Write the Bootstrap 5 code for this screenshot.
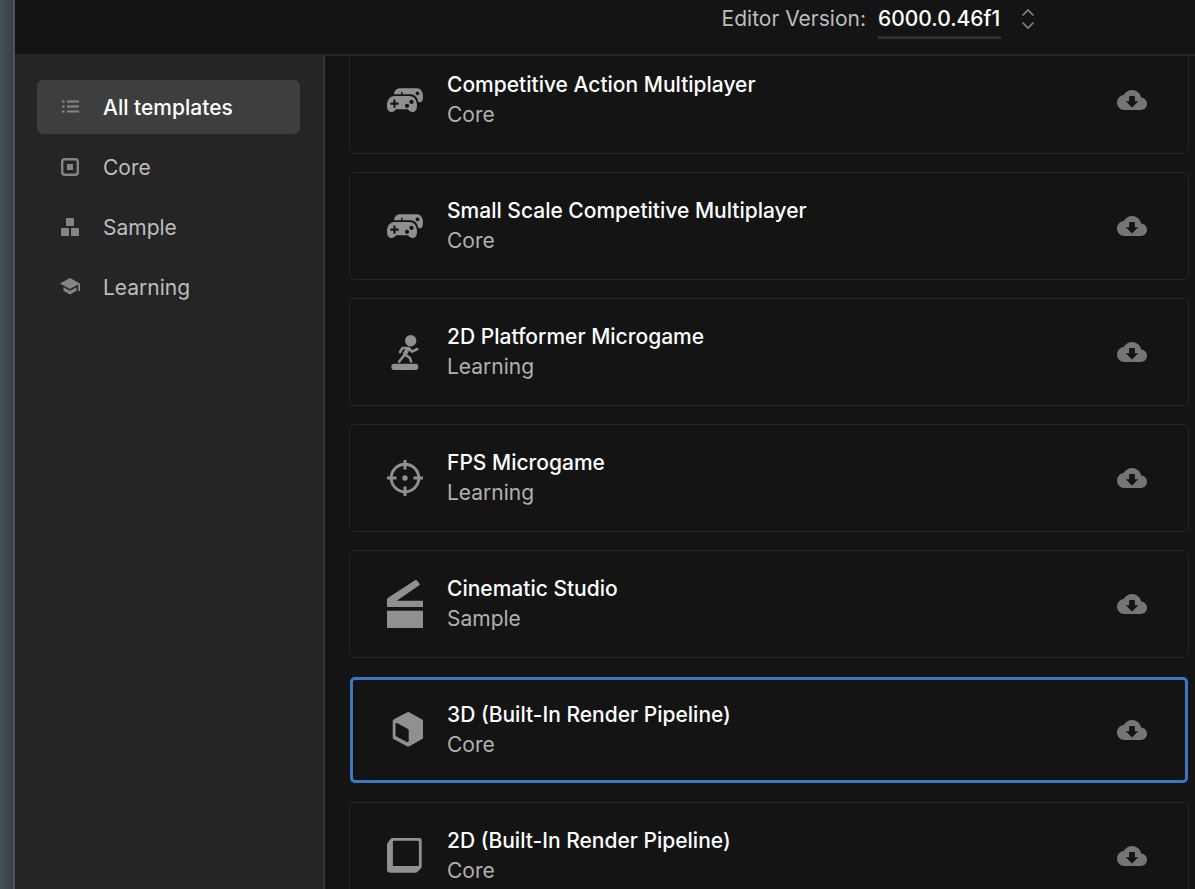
<!DOCTYPE html>
<html lang="en" data-bs-theme="dark">
<head>
<meta charset="utf-8">
<meta name="viewport" content="width=device-width, initial-scale=1">
<title>New project</title>
<link href="https://cdn.jsdelivr.net/npm/bootstrap@5.3.0/dist/css/bootstrap.min.css" rel="stylesheet">
<style>
  body { font-family: Inter, "Liberation Sans", sans-serif; font-size: 21px; line-height: 30px; color: #bdbdbd; background: #141414; }
  .desktop-edge { width: 15px; border-right: 2px solid #4e5557; background: linear-gradient(to right, #465158, #394145); }
  .topbar { height: 56px; border-bottom: 2px solid #282828; padding: 4px 160px 0 0; }
  .version-select { appearance: none; background: transparent; color: #fff; font-weight: 500; border: 0; border-bottom: 3px solid #303030; padding: 0 0 2px; margin-left: 12px; line-height: 30px; border-radius: 0; }
  .version-arrows { width: 14px; height: 22px; margin: 4px 0 0 20px; }
  .sidebar { width: 310px; background: #252525; border-right: 2px solid #363636; padding: 24px 23px 24px 22px; }
  .sidebar .nav { gap: 6px; }
  .sidebar .nav-link { display: flex; align-items: flex-end; gap: 18px; padding: 13px 18px 11px; color: #bdbdbd; border-radius: 6px; }
  .sidebar .nav-link.active { background: #3e3e3e; color: #fff; font-weight: 500; }
  .sidebar svg { width: 30px; height: 30px; margin-bottom: 1px; fill: #858585; }
  .sidebar .nav-link { height: 54px; }
  .template-pane { padding: 0 6px 0 24px; }
  /* The list is scrolled a little way down, so its first row starts under the top bar. */
  .template-list { gap: 18px; margin-top: -10px; }
  .template { --bs-card-bg: #141414; border: 1px solid #252525; border-radius: 6px; padding: 23px 41px 23px 37px; }
  .template.selected { border-color: transparent; box-shadow: inset 0 0 0 3px #3a78c3; }
  .template-icon { width: 36px; height: 48px; margin-right: 24px; color: #909090; fill: currentColor; }
  .template h2 { font-size: 21px; line-height: 30px; font-weight: 500; color: #fff; margin: 0; }
  .template p { margin: 0; color: #b0b0b0; }
  .download { padding: 0; border: 0; line-height: 0; color: #757575; }
  .download svg { width: 30px; height: 30px; fill: currentColor; }
</style>
<script src="https://cdn.jsdelivr.net/npm/bootstrap@5.3.0/dist/js/bootstrap.bundle.min.js"></script>
</head>
<body>
<svg class="d-none" aria-hidden="true">
  <symbol id="cloud" viewBox="0 0 24 24"><path d="M19.35 10.04C18.67 6.59 15.64 4 12 4 9.11 4 6.6 5.64 5.35 8.04 2.34 8.36 0 10.91 0 14c0 3.31 2.69 6 6 6h13c2.76 0 5-2.24 5-5 0-2.64-2.05-4.78-4.65-4.96zM17 13l-5 5-5-5h2.7V8.8h4.6V13z"/></symbol>
  <symbol id="gamepads" viewBox="0 0 36 48">
    <path fill-rule="evenodd" d="M7 18.300C7.500 14.500 9.500 12.300 13 12.300H30C34 12.300 36 16 36 20.500C36 24 35 26.300 33 26.300C32 26.300 31.500 26 31 25.200C30 20.500 27.500 18.300 23 18.300H15.500V15.800H14V18.300ZM30.500 15.500a1.900 1.900 0 1 0 .01 0Z"/>
    <path fill-rule="evenodd" d="M7.500 20H22.500C27 20 30 24 30 29.500C30 33.500 28.500 36 25.500 36C23.500 36 22.300 35 21 33.300H9C7.700 35 6.500 36 4.500 36C1.500 36 0 33.500 0 29.500C0 24 3 20 7.500 20ZM6.400 23.500V26.600H3.300V28.700H6.400V31.800H8.500V28.700H11.600V26.600H8.500V23.500ZM24.500 23.800a2.100 2.100 0 1 0 .01 0ZM20 27.700a2.100 2.100 0 1 0 .01 0Z"/>
  </symbol>
  <symbol id="runner" viewBox="0 0 36 48">
    <circle cx="23.700" cy="12.700" r="5.700"/>
    <rect x="4.300" y="35.800" width="27" height="6.200" rx="3"/>
    <g fill="none" stroke="currentColor" stroke-linecap="round" stroke-linejoin="round">
      <path stroke-width="2.600" d="M13 24.200L15.500 20H21.500L25 23.700L30.300 21M17.500 27L12.200 33.500M18.500 27L23 30L24 33.500"/>
      <path stroke-width="4.200" d="M20.500 21.500L18 26"/>
    </g>
  </symbol>
  <symbol id="crosshair" viewBox="0 0 36 48">
    <path fill="none" stroke="currentColor" stroke-width="2.900" d="M4.200 24a13.800 13.800 0 1 0 27.600 0a13.800 13.800 0 1 0-27.600 0"/>
    <path stroke="currentColor" stroke-width="3" d="M0 24H9.500M26.500 24H36M18 6V15.500M18 32.500V42"/>
    <circle cx="18" cy="24" r="2.700"/>
  </symbol>
  <symbol id="clapper" viewBox="0 0 36 48"><path d="M0 19.500Q0 18.500 .8 17.900L28 .3Q29.500-.4 30.400 1L32.500 3.800Q33 4.600 32.300 5.200L9.700 20.700H36V27H0ZM0 30.700H36V48H0Z"/></symbol>
  <symbol id="cube" viewBox="0 0 36 48"><path fill-rule="evenodd" d="M19.800 6.500Q21.200 5.600 22.600 6.500L36 14V32.500L22.500 40.200Q21.200 41 20 40.200L6.500 33Q5.700 32.500 5.700 31.500V15Q5.700 14 6.500 13.500ZM10.500 17.200Q8.500 16.300 8.500 18.300V29Q8.500 30 9.500 30.600L19.800 35.900Q21.700 36.600 21.700 34.700V24.500Q21.700 23.300 20.500 22.700Z"/></symbol>
  <symbol id="square" viewBox="0 0 36 48"><path fill-rule="evenodd" d="M5.500 6H32.500Q34.700 6 34.700 8V34.500Q34.700 35.500 34 36.200L30.300 39.900Q29.500 40.700 28.500 40.700H3.500Q0 40.700 0 37.500V12.500Q0 11.500 .7 10.700L3.500 7Q4.300 6 5.500 6ZM7 8.800Q5.900 8.800 5.900 10V34H30.700Q31.900 34 31.900 32.800V10Q31.900 8.800 30.700 8.800Z"/></symbol>
</svg>

<div class="d-flex vh-100 overflow-hidden">
  <div class="desktop-edge flex-shrink-0"></div>
  <div class="d-flex flex-column flex-grow-1">
    <header class="topbar d-flex justify-content-end align-items-start flex-shrink-0">
      <label for="version">Editor Version:</label>
      <select id="version" class="version-select"><option>6000.0.46f1</option></select>
      <svg class="version-arrows" viewBox="0 0 14 22" fill="none" stroke="#808080" stroke-width="1.700" aria-hidden="true"><path d="M1.500 7.500L7 2L12.500 7.500M1.500 14.500L7 20L12.500 14.500"/></svg>
    </header>
    <div class="d-flex flex-grow-1 overflow-hidden">
      <aside class="sidebar flex-shrink-0">
        <nav class="nav nav-pills flex-column" aria-label="Template categories">
          <a class="nav-link active" href="#all" aria-current="page">
            <svg viewBox="0 0 30 30"><path d="M7 8.400h2.500v2.200H7zM12 8.400h12v2.200H12zM7 13.400h2.500v2.200H7zM12 13.400h12v2.200H12zM7 18.400h2.500v2.200H7zM12 18.400h12v2.200H12z"/></svg>All templates</a>
          <a class="nav-link" href="#core">
            <svg viewBox="0 0 30 30"><rect x="7.200" y="7.200" width="15.600" height="15.600" rx="2.500" fill="none" stroke="#858585" stroke-width="2.400"/><path d="M12 12h6v6h-6z"/></svg>Core</a>
          <a class="nav-link" href="#sample">
            <svg viewBox="0 0 30 30"><rect x="11" y="6" width="8" height="8" rx="1"/><rect x="6" y="16" width="8" height="8" rx="1"/><rect x="16" y="16" width="8" height="8" rx="1"/></svg>Sample</a>
          <a class="nav-link" href="#learning">
            <svg viewBox="0 0 30 30"><path d="M15 6L5 11.500L15 17L23.200 12.500V19H25V11.500ZM8.500 15.200V18.800L15 22.500L21.500 18.800V15.200L15 18.800Z"/></svg>Learning</a>
        </nav>
      </aside>
      <main class="template-pane flex-grow-1 overflow-hidden">
        <div class="template-list d-flex flex-column">
          <article class="template card flex-row align-items-center">
            <svg class="template-icon" aria-hidden="true"><use href="#gamepads"/></svg>
            <div class="flex-grow-1"><h2>Competitive Action Multiplayer</h2><p>Core</p></div>
            <button class="download btn" type="button" aria-label="Download"><svg><use href="#cloud"/></svg></button>
          </article>
          <article class="template card flex-row align-items-center">
            <svg class="template-icon" aria-hidden="true"><use href="#gamepads"/></svg>
            <div class="flex-grow-1"><h2>Small Scale Competitive Multiplayer</h2><p>Core</p></div>
            <button class="download btn" type="button" aria-label="Download"><svg><use href="#cloud"/></svg></button>
          </article>
          <article class="template card flex-row align-items-center">
            <svg class="template-icon" aria-hidden="true"><use href="#runner"/></svg>
            <div class="flex-grow-1"><h2>2D Platformer Microgame</h2><p>Learning</p></div>
            <button class="download btn" type="button" aria-label="Download"><svg><use href="#cloud"/></svg></button>
          </article>
          <article class="template card flex-row align-items-center">
            <svg class="template-icon" aria-hidden="true"><use href="#crosshair"/></svg>
            <div class="flex-grow-1"><h2>FPS Microgame</h2><p>Learning</p></div>
            <button class="download btn" type="button" aria-label="Download"><svg><use href="#cloud"/></svg></button>
          </article>
          <article class="template card flex-row align-items-center">
            <svg class="template-icon" aria-hidden="true"><use href="#clapper"/></svg>
            <div class="flex-grow-1"><h2>Cinematic Studio</h2><p>Sample</p></div>
            <button class="download btn" type="button" aria-label="Download"><svg><use href="#cloud"/></svg></button>
          </article>
          <article class="template selected card flex-row align-items-center">
            <svg class="template-icon" aria-hidden="true"><use href="#cube"/></svg>
            <div class="flex-grow-1"><h2>3D (Built-In Render Pipeline)</h2><p>Core</p></div>
            <button class="download btn" type="button" aria-label="Download"><svg><use href="#cloud"/></svg></button>
          </article>
          <article class="template card flex-row align-items-center">
            <svg class="template-icon" aria-hidden="true"><use href="#square"/></svg>
            <div class="flex-grow-1"><h2>2D (Built-In Render Pipeline)</h2><p>Core</p></div>
            <button class="download btn" type="button" aria-label="Download"><svg><use href="#cloud"/></svg></button>
          </article>
        </div>
      </main>
    </div>
  </div>
</div>
</body>
</html>
